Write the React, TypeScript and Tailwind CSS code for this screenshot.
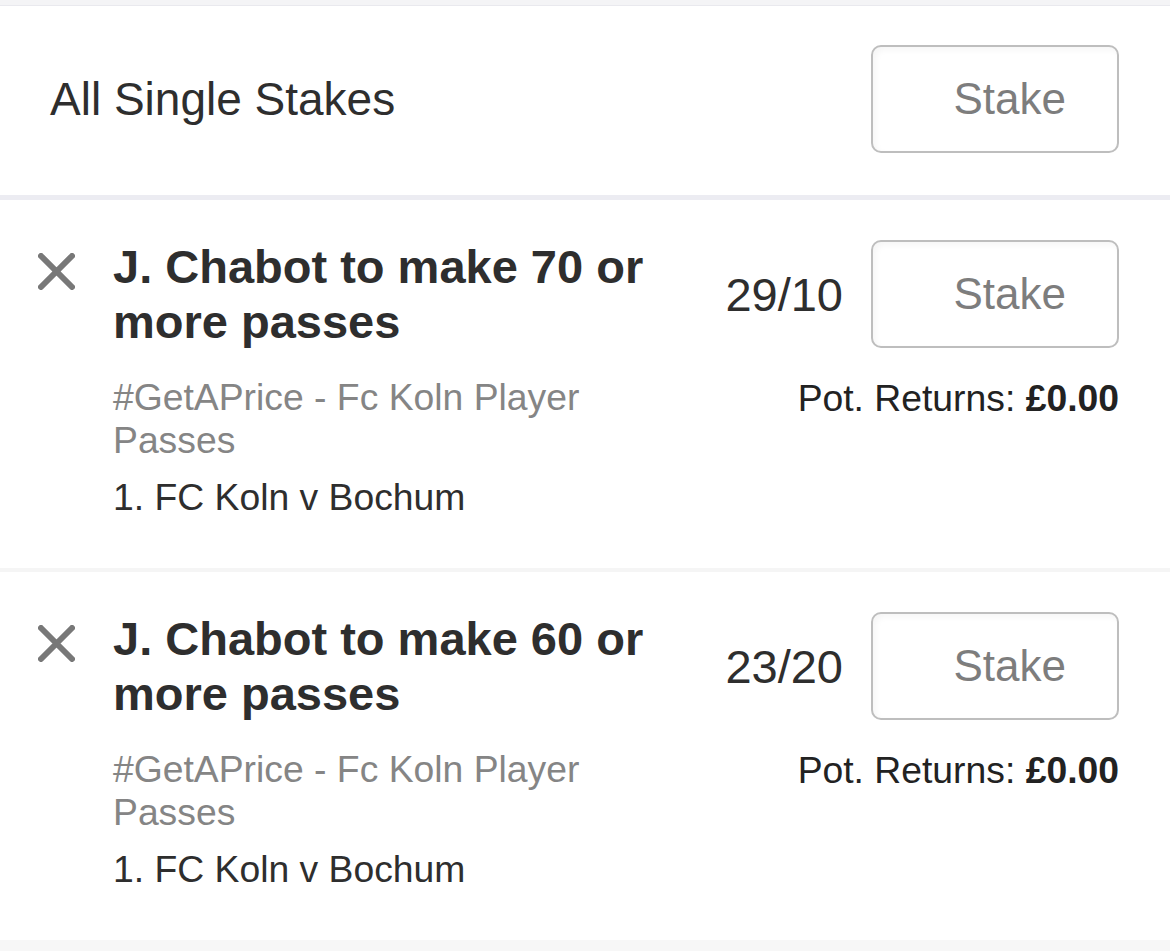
import { ReactNode } from "react";

type Bet = {
	title: string;
	odds: string;
	market: string;
	event: string;
	returns: string;
};

const bets: Bet[] = [
	{
		title: "J. Chabot to make 70 or more passes",
		odds: "29/10",
		market: "#GetAPrice - Fc Koln Player Passes",
		event: "1. FC Koln v Bochum",
		returns: "£0.00",
	},
	{
		title: "J. Chabot to make 60 or more passes",
		odds: "23/20",
		market: "#GetAPrice - Fc Koln Player Passes",
		event: "1. FC Koln v Bochum",
		returns: "£0.00",
	},
];

function StakeBox() {
	return (
		<div className="flex items-center justify-end w-[248px] h-[108px] pr-[51px] border-2 border-[#bebebe] rounded-[10px] bg-white shadow-[inset_3px_3px_6px_rgba(0,0,0,0.04)]">
			<span className="text-[44px] leading-none text-[#7d7d7d]">Stake</span>
		</div>
	);
}

function CloseIcon() {
	return (
		<svg width="37" height="37" viewBox="0 0 37 37" className="shrink-0 mt-[14px]">
			<path
				d="M3 3 L34 34 M34 3 L3 34"
				stroke="#787878"
				strokeWidth="6"
				strokeLinecap="round"
			/>
		</svg>
	);
}

function Separator({ className }: { className: string }): ReactNode {
	return <div className={className} />;
}

function BetRow({ bet }: { bet: Bet }) {
	return (
		<div className="flex pl-[38px] pr-[51px] pt-[39px] pb-[49px] bg-white">
			<CloseIcon />
			<div className="flex flex-col w-[575px] ml-[38px]">
				<p className="text-[47px] leading-[55px] font-bold text-[#2e2e2e]">
					{bet.title}
				</p>
				<p className="mt-[27px] text-[37.3px] leading-[43px] text-[#858585]">
					{bet.market}
				</p>
				<p className="mt-[14px] text-[37.3px] leading-[43px] text-[#2e2e2e]">
					{bet.event}
				</p>
			</div>
			<div className="flex flex-col items-end ml-auto">
				<div className="flex items-center gap-[28px] mt-[1px]">
					<span className="text-[47px] leading-none text-[#2e2e2e]">
						{bet.odds}
					</span>
					<StakeBox />
				</div>
				<p className="mt-[29px] text-[37.3px] leading-[43px] text-[#222]">
					Pot. Returns: <span className="font-bold">{bet.returns}</span>
				</p>
			</div>
		</div>
	);
}

export default function App() {
	return (
		<div
			className="flex flex-col w-[1170px] h-[951px] bg-[#f7f7f7] overflow-hidden"
			style={{ fontFamily: '"Liberation Sans", Arial, sans-serif' }}
		>
			<Separator className="h-[6px] bg-[#f4f4f6] border-b border-[#e9e9ee]" />
			<div className="flex items-center justify-between h-[189px] pl-[50px] pr-[51px] pb-[3px] bg-white">
				<span className="text-[46px] leading-none text-[#2e2e2e]">
					All Single Stakes
				</span>
				<StakeBox />
			</div>
			<Separator className="h-[5px] bg-[#ececf2]" />
			<BetRow bet={bets[0]} />
			<Separator className="h-[4px] bg-[#f5f5f5]" />
			<BetRow bet={bets[1]} />
		</div>
	);
}
